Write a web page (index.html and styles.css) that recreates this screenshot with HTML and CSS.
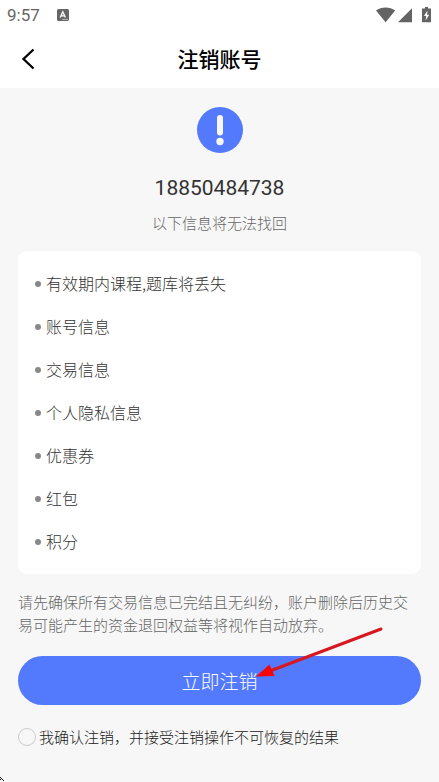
FILE: index.html
```html
<!DOCTYPE html>
<html lang="zh-CN">
<head>
<meta charset="utf-8">
<meta name="viewport" content="width=device-width, initial-scale=1">
<title>注销账号</title>
<link rel="stylesheet" href="styles.css">
</head>
<body>
<div class="status-bar">
  <span class="clock">9:57</span>
  <svg class="input-icon" viewBox="0 0 12 12" aria-hidden="true">
    <rect width="12" height="12" rx="1.5" fill="#666"/>
    <path d="M3.2 8.6 5.8 2.8 8.4 8.6M4.2 6.8h3.2" fill="none" stroke="#fff" stroke-width="1.3"/>
    <path d="M5.5 10.5h5" stroke="#fff" stroke-width="1" stroke-dasharray="1 1"/>
  </svg>
  <svg class="system-icons" viewBox="0 0 56 17" aria-hidden="true">
    <g fill="#636363">
      <path d="M0 3.4C5.4-.5 13.8-.5 19.200 3.400L9.600 15.200Z"/>
      <path d="M36 1.200V15.200H22Z"/>
      <path d="M49 0h3v1.500h3V15.200H46V1.500h3Z"/>
    </g>
    <path d="M51.600 3.500 48 9h2.200l-.6 4.500L53.200 7.700H51Z" fill="#fff"/>
  </svg>
</div>
<header class="nav">
  <button class="back" type="button" aria-label="返回">
    <svg viewBox="0 0 14 22" aria-hidden="true"><path d="M12.500 1.500 2.500 11l10 9.500" fill="none" stroke="#000" stroke-width="2.300"/></svg>
  </button>
  <h1>注销账号</h1>
</header>
<main>
  <section class="summary">
    <svg class="alert" viewBox="0 0 46 46" aria-hidden="true">
      <circle cx="23" cy="23" r="23" fill="#5379fd"/>
      <path d="M23 11v14.500" stroke="#f7f7f7" stroke-width="6" stroke-linecap="round"/>
      <circle cx="23" cy="34.500" r="3.700" fill="#f7f7f7"/>
    </svg>
    <p class="phone">18850484738</p>
    <p class="hint">以下信息将无法找回</p>
  </section>
  <ul class="card">
    <li>有效期内课程,题库将丢失</li>
    <li>账号信息</li>
    <li>交易信息</li>
    <li>个人隐私信息</li>
    <li>优惠券</li>
    <li>红包</li>
    <li>积分</li>
  </ul>
  <p class="notice">请先确保所有交易信息已完结且无纠纷，账户删除后历史交易可能产生的资金退回权益等将视作自动放弃。</p>
  <div class="action">
    <button class="submit" type="button">立即注销</button>
    <svg class="arrow" viewBox="0 0 128 52" aria-hidden="true">
      <path d="M125 2 14 44" stroke="#d81820" stroke-width="3" stroke-linecap="round"/>
      <path d="M0 49.500 13.500 37.500 18.500 49Z" fill="#fa0505"/>
    </svg>
  </div>
  <label class="confirm"><input type="checkbox">我确认注销，并接受注销操作不可恢复的结果</label>
</main>
<svg class="pointer" viewBox="0 0 5 5" aria-hidden="true"><path d="M0 0h1v1H0zM1 1h1v1H1zM2 2h1v1H2zM3 3h1v1H3zM0 2h1v1H0z" fill="#111"/></svg>
</body>
</html>
```
FILE: styles.css
```css
* {
  box-sizing: border-box;
}

body {
  margin: 0;
  min-height: 100vh;
  background: #f7f7f7;
  color: #333;
  font-family: "Noto Sans CJK SC", sans-serif;
  font-weight: 300;
}

h1,
p,
ul {
  margin: 0;
  padding: 0;
}

button {
  border: 0;
  padding: 0;
  font-family: inherit;
  font-weight: inherit;
}

.status-bar {
  display: flex;
  align-items: center;
  height: 30px;
  padding: 0 7px;
  background: #fff;
}

.clock {
  color: #666;
  font-family: Roboto, sans-serif;
  font-size: 17px;
  font-weight: 400;
  line-height: 30px;
}

.input-icon {
  width: 12px;
  height: 12px;
  margin-left: 17px;
}

.system-icons {
  width: 56px;
  height: 17px;
  margin-left: auto;
}

.nav {
  display: grid;
  grid-template-columns: 56px 1fr 56px;
  align-items: center;
  height: 58px;
  background: #fff;
}

.back {
  display: flex;
  align-items: center;
  justify-content: center;
  height: 48px;
  background: none;
}

.back svg {
  width: 14px;
  height: 22px;
}

h1 {
  padding-bottom: 2px;
  color: #000;
  font-size: 21px;
  font-weight: 500;
  line-height: 30px;
  text-align: center;
}

main {
  padding: 19px 18px 32px;
}

.summary {
  display: flex;
  flex-direction: column;
  align-items: center;
}

.alert {
  width: 46px;
  height: 46px;
}

.phone {
  margin-top: 20px;
  color: #333;
  font-family: Roboto, sans-serif;
  font-size: 21px;
  font-weight: 400;
  line-height: 30px;
}

.hint {
  margin-top: 8px;
  color: #666;
  font-size: 15px;
  line-height: 24px;
}

.card {
  margin-top: 16px;
  padding: 11px 17px;
  border-radius: 9px;
  background: #fff;
  list-style: none;
}

.card li {
  display: flex;
  align-items: center;
  gap: 5px;
  font-size: 16px;
  line-height: 43px;
}

.card li::before {
  content: "";
  width: 6px;
  height: 6px;
  border-radius: 50%;
  background: #888;
}

.notice {
  margin-top: 16px;
  color: #666;
  font-size: 15px;
  line-height: 23px;
}

.action {
  position: relative;
  margin-top: 20px;
}

.submit {
  width: 100%;
  height: 49px;
  border-radius: 25px;
  background: #5379fd;
  color: #fff;
  font-size: 19px;
}

.arrow {
  position: absolute;
  top: -29px;
  left: 238px;
  width: 128px;
  height: 52px;
  pointer-events: none;
}

.confirm {
  display: flex;
  align-items: center;
  gap: 3px;
  margin-top: 20px;
  color: #222;
  font-size: 15px;
  line-height: 24px;
}

.confirm input {
  appearance: none;
  flex: none;
  width: 18px;
  height: 18px;
  margin: 0;
  border: 1px solid #ccc;
  border-radius: 50%;
}

.confirm input:checked {
  border-color: #5379fd;
  background: #5379fd;
}

.pointer {
  position: fixed;
  bottom: 0;
  left: 0;
  width: 5px;
  height: 5px;
}
```
